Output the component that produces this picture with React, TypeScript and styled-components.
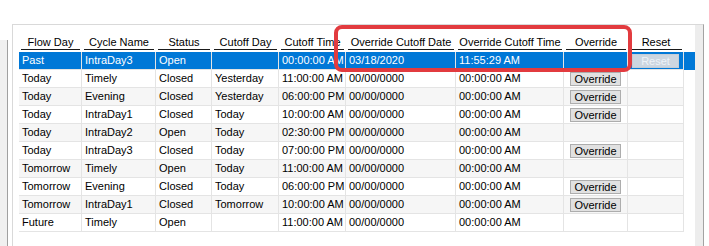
import * as React from 'react';
import styled, { createGlobalStyle } from 'styled-components';

const GlobalStyle = createGlobalStyle`
  html, body {
    margin: 0;
    padding: 0;
    background: #fff;
  }
  body {
    font-family: 'Liberation Sans', Arial, sans-serif;
    font-size: 11px;
    color: #000;
  }
`;

type Column = { title: string; width: number };

const columns: Column[] = [
  { title: 'Flow Day', width: 63 },
  { title: 'Cycle Name', width: 74 },
  { title: 'Status', width: 56 },
  { title: 'Cutoff Day', width: 67 },
  { title: 'Cutoff Time', width: 67 },
  { title: 'Override Cutoff Date', width: 110 },
  { title: 'Override Cutoff Time', width: 108 },
  { title: 'Override', width: 64 },
  { title: 'Reset', width: 56 },
];

type Cycle = {
  flowDay: string;
  cycle: string;
  status: string;
  cutoffDay: string;
  cutoffTime: string;
  overrideDate: string;
  overrideTime: string;
  canOverride: boolean;
  selected?: boolean;
};

const cycles: Cycle[] = [
  { flowDay: 'Past', cycle: 'IntraDay3', status: 'Open', cutoffDay: '', cutoffTime: '00:00:00 AM', overrideDate: '03/18/2020', overrideTime: '11:55:29 AM', canOverride: false, selected: true },
  { flowDay: 'Today', cycle: 'Timely', status: 'Closed', cutoffDay: 'Yesterday', cutoffTime: '11:00:00 AM', overrideDate: '00/00/0000', overrideTime: '00:00:00 AM', canOverride: true },
  { flowDay: 'Today', cycle: 'Evening', status: 'Closed', cutoffDay: 'Yesterday', cutoffTime: '06:00:00 PM', overrideDate: '00/00/0000', overrideTime: '00:00:00 AM', canOverride: true },
  { flowDay: 'Today', cycle: 'IntraDay1', status: 'Closed', cutoffDay: 'Today', cutoffTime: '10:00:00 AM', overrideDate: '00/00/0000', overrideTime: '00:00:00 AM', canOverride: true },
  { flowDay: 'Today', cycle: 'IntraDay2', status: 'Open', cutoffDay: 'Today', cutoffTime: '02:30:00 PM', overrideDate: '00/00/0000', overrideTime: '00:00:00 AM', canOverride: false },
  { flowDay: 'Today', cycle: 'IntraDay3', status: 'Closed', cutoffDay: 'Today', cutoffTime: '07:00:00 PM', overrideDate: '00/00/0000', overrideTime: '00:00:00 AM', canOverride: true },
  { flowDay: 'Tomorrow', cycle: 'Timely', status: 'Open', cutoffDay: 'Today', cutoffTime: '11:00:00 AM', overrideDate: '00/00/0000', overrideTime: '00:00:00 AM', canOverride: false },
  { flowDay: 'Tomorrow', cycle: 'Evening', status: 'Closed', cutoffDay: 'Today', cutoffTime: '06:00:00 PM', overrideDate: '00/00/0000', overrideTime: '00:00:00 AM', canOverride: true },
  { flowDay: 'Tomorrow', cycle: 'IntraDay1', status: 'Closed', cutoffDay: 'Tomorrow', cutoffTime: '10:00:00 AM', overrideDate: '00/00/0000', overrideTime: '00:00:00 AM', canOverride: true },
  { flowDay: 'Future', cycle: 'Timely', status: 'Open', cutoffDay: '', cutoffTime: '11:00:00 AM', overrideDate: '00/00/0000', overrideTime: '00:00:00 AM', canOverride: false },
];

const Page = styled.div`
  position: relative;
  display: flex;
  height: 246px;
  padding-top: 24px;
  box-sizing: border-box;
  overflow: hidden;
`;

const SideStrip = styled.div`
  width: 7px;
  margin-top: 16px;
  background: #f0f0f0;
  border-right: 1px solid #a0a0a0;
`;

const Panel = styled.div`
  display: flex;
  margin-left: 4px;
  border-top: 1px solid #d9d9d9;
  border-left: 1px solid #d9d9d9;
  border-right: 1px solid #a3a3a3;
  padding-left: 6px;
`;

const Grid = styled.div`
  width: 676px;
  padding-top: 5px;
  background: #fff;
`;

const Gutter = styled.div`
  width: 8px;
  background: #ededed;
`;

const HeaderRow = styled.div`
  display: flex;
  height: 22px;
`;

const HeaderCell = styled.div<{ $width: number }>`
  width: ${(p) => p.$width}px;
  display: flex;
  align-items: flex-end;
  padding-bottom: 2px;
  box-sizing: border-box;
`;

const HeaderLabel = styled.div`
  flex: 1;
  margin: 0 2px;
  line-height: 13px;
  text-align: center;
  white-space: nowrap;
  border-bottom: 1px solid #1a1a1a;
`;

const Row = styled.div<{ $selected?: boolean }>`
  display: flex;
  height: 18px;
  background: ${(p) => (p.$selected ? '#0078d7' : 'transparent')};
  color: ${(p) => (p.$selected ? '#fff' : '#000')};
`;

const Cell = styled.div<{ $width: number; $stripe?: boolean }>`
  width: ${(p) => p.$width}px;
  box-sizing: border-box;
  padding-left: 3px;
  line-height: 17px;
  white-space: nowrap;
  overflow: hidden;
  border-right: 1px solid #e4e4e4;
  border-bottom: 1px solid #e4e4e4;
  background: ${(p) => (p.$stripe ? '#f6f6f6' : 'transparent')};
`;

const ButtonCell = styled(Cell)`
  display: flex;
  align-items: center;
  padding-left: 6px;
`;

const GridButton = styled.button<{ $disabled?: boolean }>`
  width: ${(p) => (p.$disabled ? 47 : 51)}px;
  height: 14px;
  margin: 0;
  padding: 0;
  font-family: inherit;
  font-size: 11px;
  line-height: 12px;
  color: ${(p) => (p.$disabled ? '#eef3f8' : '#000')};
  background: ${(p) => (p.$disabled ? '#ccd6e0' : '#e1e1e1')};
  border: 1px solid ${(p) => (p.$disabled ? '#c4ced8' : '#adadad')};
  border-radius: 0;
`;

const Highlight = styled.div`
  position: absolute;
  left: 334px;
  top: 25px;
  width: 298px;
  height: 47px;
  box-sizing: border-box;
  border: 4px solid #e23b3f;
  border-radius: 8px;
  pointer-events: none;
`;

const CycleRow = ({ item, index }: { item: Cycle; index: number }) => {
  const stripe = !item.selected && index % 2 === 0;
  const texts = [
    item.flowDay,
    item.cycle,
    item.status,
    item.cutoffDay,
    item.cutoffTime,
    item.overrideDate,
    item.overrideTime,
  ];
  return (
    <Row $selected={item.selected}>
      {texts.map((t, i) => (
        <Cell key={i} $width={columns[i].width} $stripe={stripe}>
          {t}
        </Cell>
      ))}
      <ButtonCell $width={columns[7].width} $stripe={stripe}>
        {item.canOverride && <GridButton>Override</GridButton>}
      </ButtonCell>
      <ButtonCell $width={columns[8].width} $stripe={stripe} style={{ paddingLeft: 4 }}>
        {item.selected && <GridButton $disabled>Reset</GridButton>}
      </ButtonCell>
    </Row>
  );
};

export default function App() {
  return (
    <>
      <GlobalStyle />
      <Page>
        <SideStrip />
        <Panel>
          <Grid>
            <HeaderRow>
              {columns.map((c) => (
                <HeaderCell key={c.title} $width={c.width}>
                  <HeaderLabel>{c.title}</HeaderLabel>
                </HeaderCell>
              ))}
            </HeaderRow>
            {cycles.map((item, i) => (
              <CycleRow key={i} item={item} index={i} />
            ))}
          </Grid>
          <Gutter />
        </Panel>
        <Highlight />
      </Page>
    </>
  );
}
